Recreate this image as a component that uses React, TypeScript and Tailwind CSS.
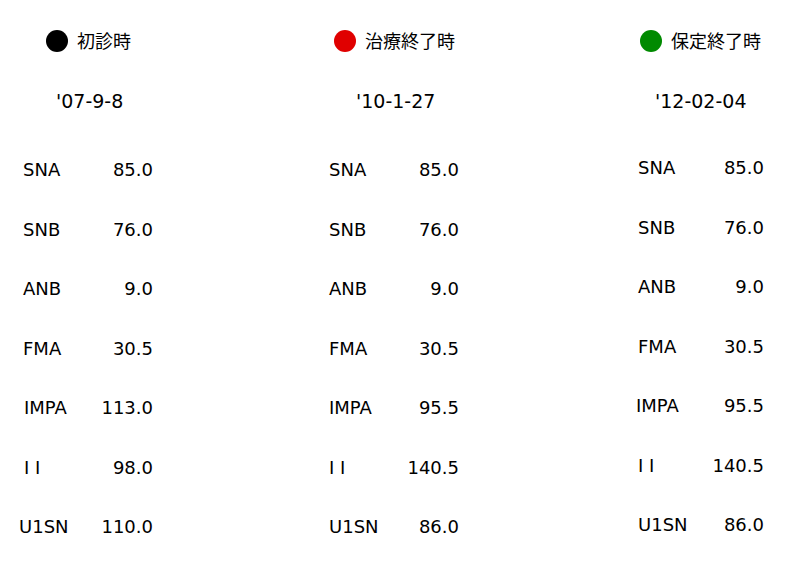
import React from "react";

type Row = { label: string; value: string; shift?: string };

type Column = {
  title: string;
  dot: string;
  date: string;
  headerPad: string;
  datePad: string;
  rowsPad: string;
  rowsWidth: string;
  rowsTop: string;
  rows: Row[];
};

const columns: Column[] = [
  {
    title: "初診時",
    dot: "bg-black",
    date: "'07-9-8",
    headerPad: "pl-[46px]",
    datePad: "pl-[56px]",
    rowsPad: "pl-[23px]",
    rowsWidth: "w-[130px]",
    rowsTop: "mt-[25px]",
    rows: [
      { label: "SNA", value: "85.0" },
      { label: "SNB", value: "76.0" },
      { label: "ANB", value: "9.0" },
      { label: "FMA", value: "30.5" },
      { label: "IMPA", value: "113.0", shift: "ml-px" },
      { label: "I I", value: "98.0", shift: "ml-px" },
      { label: "U1SN", value: "110.0", shift: "-ml-1" },
    ],
  },
  {
    title: "治療終了時",
    dot: "bg-[#e00000]",
    date: "'10-1-27",
    headerPad: "pl-[28px]",
    datePad: "pl-[50px]",
    rowsPad: "pl-[23px]",
    rowsWidth: "w-[130px]",
    rowsTop: "mt-[25px]",
    rows: [
      { label: "SNA", value: "85.0" },
      { label: "SNB", value: "76.0" },
      { label: "ANB", value: "9.0" },
      { label: "FMA", value: "30.5" },
      { label: "IMPA", value: "95.5" },
      { label: "I I", value: "140.5" },
      { label: "U1SN", value: "86.0" },
    ],
  },
  {
    title: "保定終了時",
    dot: "bg-[#008a00]",
    date: "'12-02-04",
    headerPad: "pl-[28px]",
    datePad: "pl-[43px]",
    rowsPad: "pl-[26px]",
    rowsWidth: "w-[126px]",
    rowsTop: "mt-[23px]",
    rows: [
      { label: "SNA", value: "85.0" },
      { label: "SNB", value: "76.0" },
      { label: "ANB", value: "9.0" },
      { label: "FMA", value: "30.5" },
      { label: "IMPA", value: "95.5", shift: "-ml-0.5" },
      { label: "I I", value: "140.5" },
      { label: "U1SN", value: "86.0" },
    ],
  },
];

const widths = ["w-[306px]", "w-[306px]", "w-[188px]"];

function CephColumn({ col, width }: { col: Column; width: string }) {
  return (
    <div className={`${width} flex flex-col pt-[27px]`}>
      <div className={`flex h-7 items-center gap-[9px] ${col.headerPad}`}>
        <span className={`h-[22px] w-[22px] rounded-full ${col.dot}`} />
        <span className="text-[18px]">{col.title}</span>
      </div>
      <div className={`mt-[32px] flex h-7 items-center text-[19px] ${col.datePad}`}>
        {col.date}
      </div>
      <div className={`${col.rowsTop} ${col.rowsPad}`}>
        {col.rows.map((r) => (
          <div
            key={r.label}
            className={`flex h-[59.5px] items-center justify-between text-[18px] ${col.rowsWidth}`}
          >
            <span className={r.shift ?? ""}>{r.label}</span>
            <span>{r.value}</span>
          </div>
        ))}
      </div>
    </div>
  );
}

export default function App() {
  return (
    <div className="flex h-[584px] w-[800px] bg-white font-['DejaVu_Sans','Noto_Sans_CJK_JP',sans-serif] text-black">
      {columns.map((c, i) => (
        <CephColumn key={c.title} col={c} width={widths[i]} />
      ))}
    </div>
  );
}
